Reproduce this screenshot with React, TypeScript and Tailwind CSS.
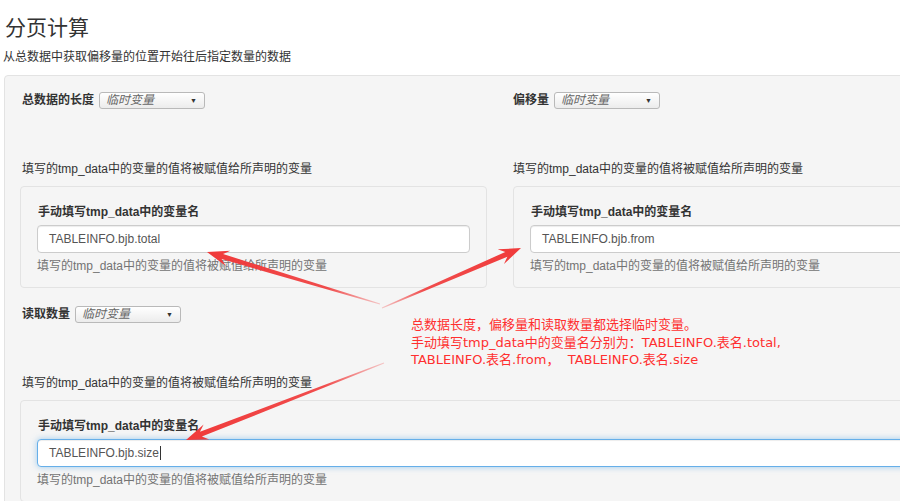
import React from "react";

const FONT = { fontFamily: '"Liberation Sans", "Noto Sans CJK SC", sans-serif' };
const NOTE_FONT = { fontFamily: '"DejaVu Sans", "Noto Sans CJK SC", sans-serif' };

function Select() {
  return (
    <div className="flex h-[17px] w-[106px] items-center justify-between rounded-[3px] border border-[#b9b9b9] bg-gradient-to-b from-white to-[#ececec] pl-[6px] pr-[7px]">
      <span className="text-[12px] italic leading-[15px] text-[#666]">临时变量</span>
      <span className="text-[7px] leading-none text-[#333]">▼</span>
    </div>
  );
}

function Labeled({ label, pad }: { label: string; pad: boolean }) {
  return (
    <div className={"flex h-[16px] items-center gap-[5px] " + (pad ? "pl-[2px]" : "")}>
      <span className="text-[12px] font-bold leading-[16px] text-[#333]">{label}</span>
      <Select />
    </div>
  );
}

const DESC = "填写的tmp_data中的变量的值将被赋值给所声明的变量";

function Well({ value, focus }: { value: string; focus?: boolean }) {
  return (
    <div className="rounded-[4px] border border-[#e3e3e3] bg-[#f5f5f5] px-[16px] pb-[13px] pt-[17px]">
      <div className="pl-[1px] text-[12px] font-bold leading-[16px] text-[#333]">手动填写tmp_data中的变量名</div>
      <div
        className={
          "mt-[5px] flex h-[28px] items-center rounded-[4px] border bg-white px-[11px] text-[12px] text-[#555] " +
          (focus
            ? "border-[#66afe9] shadow-[inset_0_1px_1px_rgba(0,0,0,0.075),0_0_6px_rgba(102,175,233,0.6)]"
            : "border-[#ccc] shadow-[inset_0_1px_1px_rgba(0,0,0,0.075)]")
        }
      >
        <span>{value}</span>
        {focus && <span className="ml-[1px] inline-block h-[14px] w-[1px] bg-[#333]" />}
      </div>
      <div className="mt-[5px] text-[12px] leading-[16px] text-[#737373]">{DESC}</div>
    </div>
  );
}

function Column({
  label,
  value,
  focus,
  wide,
  pad = true,
}: {
  label: string;
  value: string;
  focus?: boolean;
  wide?: boolean;
  pad?: boolean;
}) {
  return (
    <div className={wide ? "col-span-2" : ""}>
      <Labeled label={label} pad={pad} />
      <div className={"mt-[53px] text-[12px] leading-[16px] text-[#333] " + (pad ? "pl-[2px]" : "")}>{DESC}</div>
      <div className="mt-[9px]">
        <Well value={value} focus={focus} />
      </div>
    </div>
  );
}

function arrowPoints(tx: number, ty: number, hx: number, hy: number) {
  const dx = hx - tx;
  const dy = hy - ty;
  const L = Math.hypot(dx, dy);
  const ux = dx / L;
  const uy = dy / L;
  const nx = -uy;
  const ny = ux;
  const neck = 16;
  const barb = 22;
  const pts: [number, number][] = [
    [tx + nx * 0.5, ty + ny * 0.5],
    [hx - ux * neck + nx * 2.6, hy - uy * neck + ny * 2.6],
    [hx - ux * barb + nx * 8, hy - uy * barb + ny * 8],
    [hx, hy],
    [hx - ux * barb - nx * 8, hy - uy * barb - ny * 8],
    [hx - ux * neck - nx * 2.6, hy - uy * neck - ny * 2.6],
    [tx - nx * 0.5, ty - ny * 0.5],
  ];
  return pts.map((p) => p.join(",")).join(" ");
}

const ARROWS: [number, number, number, number][] = [
  [380, 304, 207, 252],
  [382, 308, 521, 248],
  [384, 363, 186, 440],
];

export default function App() {
  return (
    <div className="relative h-[501px] w-[900px] overflow-hidden bg-white" style={FONT}>
      <div className="pl-[5px] pt-[16px] text-[21px] leading-[24px] text-[#333]">分页计算</div>
      <div className="mt-[9px] pl-[3px] text-[12px] leading-[16px] text-[#333]">从总数据中获取偏移量的位置开始往后指定数量的数据</div>
      <div className="ml-[4px] mt-[10px] w-[1000px] rounded-[4px] border border-[#e3e3e3] bg-[#f5f5f5] pb-[40px] pl-[15px] pt-[16px]">
        <div className="grid grid-cols-[467px_467px] gap-x-[26px] gap-y-[18px]">
          <Column label="总数据的长度" value="TABLEINFO.bjb.total" />
          <Column label="偏移量" value="TABLEINFO.bjb.from" pad={false} />
          <Column label="读取数量" value="TABLEINFO.bjb.size" focus wide />
        </div>
      </div>

      <div
        className="absolute left-[411px] top-[316px] whitespace-pre text-[13px] leading-[17.5px] text-[#ff2f2f]"
        style={NOTE_FONT}
      >
        <div>总数据长度，偏移量和读取数量都选择临时变量。</div>
        <div>手动填写tmp_data中的变量名分别为：TABLEINFO.表名.total,</div>
        <div>TABLEINFO.表名.from，  TABLEINFO.表名.size</div>
      </div>

      <svg className="pointer-events-none absolute left-0 top-0" width="900" height="501">
        <defs>
          {ARROWS.map(([tx, ty, hx, hy], i) => (
            <linearGradient key={i} id={"ag" + i} gradientUnits="userSpaceOnUse" x1={tx} y1={ty} x2={hx} y2={hy}>
              <stop offset="0" stopColor="#f03a3a" stopOpacity="0.25" />
              <stop offset="0.3" stopColor="#f03a3a" stopOpacity="0.9" />
              <stop offset="1" stopColor="#f03a3a" stopOpacity="1" />
            </linearGradient>
          ))}
        </defs>
        {ARROWS.map(([tx, ty, hx, hy], i) => (
          <polygon key={i} points={arrowPoints(tx, ty, hx, hy)} fill={"url(#ag" + i + ")"} />
        ))}
      </svg>
    </div>
  );
}
